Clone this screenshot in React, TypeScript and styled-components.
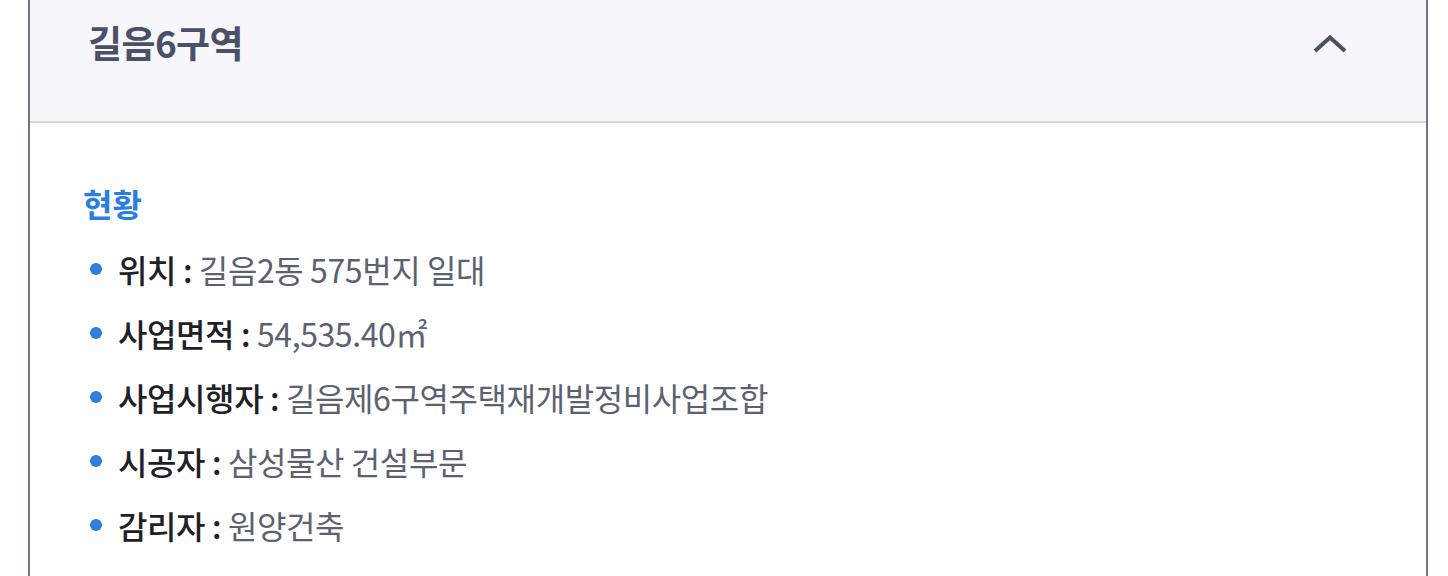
import React from "react";
import styled, { createGlobalStyle } from "styled-components";

const GlobalStyle = createGlobalStyle`
  html, body { margin: 0; padding: 0; background: #ffffff; }
  body { font-family: "Noto Sans CJK KR", "Noto Sans", sans-serif; }
  * { box-sizing: border-box; }
`;

const Panel = styled.section`
  margin-left: 28px;
  width: 1400px;
  min-height: 576px;
  border-left: 2px solid #6f7489;
  border-right: 2px solid #6f7489;
  background: #ffffff;
`;

const Header = styled.div`
  height: 123px;
  display: flex;
  align-items: flex-start;
  justify-content: space-between;
  padding: 18px 76px 0 58px;
  background: #f7f7fb;
  border-bottom: 2px solid #d5d6db;
`;

const Title = styled.h2`
  margin: 0;
  font-size: 37px;
  line-height: 48px;
  font-weight: 700;
  color: #4a5068;
  letter-spacing: -0.6px;
`;

const ToggleButton = styled.button`
  width: 40px;
  height: 48px;
  margin-top: 2px;
  padding: 0;
  border: 0;
  background: transparent;
  display: flex;
  align-items: center;
  justify-content: center;
  color: #4b5066;
`;

const Body = styled.div`
  padding: 59px 40px 0 53px;
`;

const SectionTitle = styled.h3`
  margin: 0 0 13px;
  font-size: 32px;
  line-height: 42px;
  font-weight: 700;
  color: #2a7de1;
`;

const List = styled.ul`
  margin: 0;
  padding: 0 0 0 7px;
  list-style: none;
`;

const Item = styled.li`
  display: flex;
  align-items: center;
  height: 64px;
  font-size: 32px;
  letter-spacing: -0.4px;
`;

const Dot = styled.span`
  width: 12px;
  height: 12px;
  border-radius: 50%;
  background: #2a7de1;
  margin-right: 16px;
  flex: none;
`;

const Label = styled.span`
  font-weight: 500;
  color: #1f2129;
  white-space: pre;
`;

const Value = styled.span`
  font-weight: 400;
  color: #5c6171;
`;

const items: [string, string][] = [
  ["위치", "길음2동 575번지 일대"],
  ["사업면적", "54,535.40㎡"],
  ["사업시행자", "길음제6구역주택재개발정비사업조합"],
  ["시공자", "삼성물산 건설부문"],
  ["감리자", "원양건축"],
];

export default function App() {
  return (
    <>
      <GlobalStyle />
      <Panel>
        <Header>
          <Title>길음6구역</Title>
          <ToggleButton aria-label="접기">
            <svg width="34" height="20" viewBox="0 0 34 20" fill="none">
              <path d="M2 17 L17 3.5 L32 17" stroke="currentColor" strokeWidth="4" strokeLinecap="butt" strokeLinejoin="miter" />
            </svg>
          </ToggleButton>
        </Header>
        <Body>
          <SectionTitle>현황</SectionTitle>
          <List>
            {items.map(([k, v]) => (
              <Item key={k}>
                <Dot />
                <Label>{k} : </Label>
                <Value>{v}</Value>
              </Item>
            ))}
          </List>
        </Body>
      </Panel>
    </>
  );
}
